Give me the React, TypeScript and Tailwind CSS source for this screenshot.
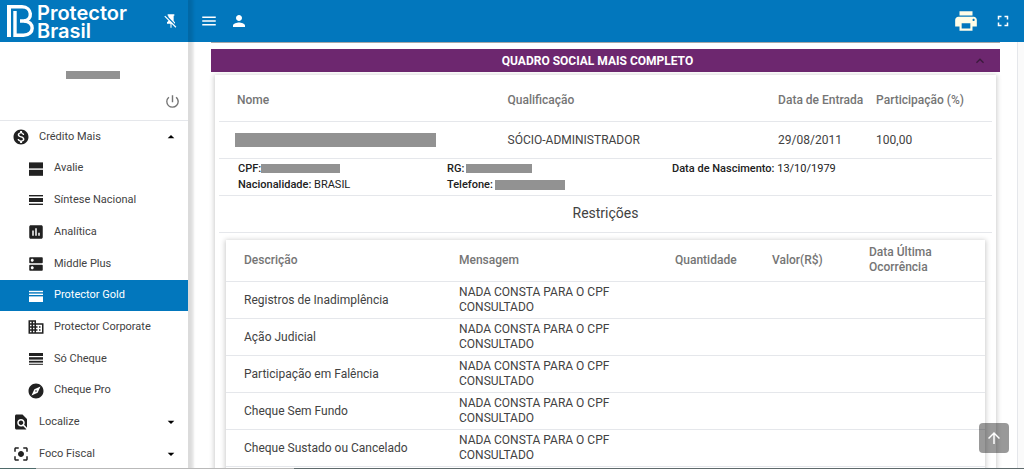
import { ReactNode, useState } from 'react';
import {
  MdArrowDropDown,
  MdArrowDropUp,
  MdArrowUpward,
  MdAssessment,
  MdBusiness,
  MdCenterFocusStrong,
  MdDns,
  MdExplore,
  MdFindInPage,
  MdFullscreen,
  MdKeyboardArrowUp,
  MdMenu,
  MdMonetizationOn,
  MdPerson,
  MdPowerSettingsNew,
  MdPrint,
} from 'react-icons/md';

type Bar = [y: number, height: number];

// Material style "stacked bars" icons, one rect per bar
const BarsIcon = ({ bars }: { bars: Bar[] }) => (
  <svg className="w-[18px] h-[18px]" viewBox="0 0 18 18" fill="currentColor">
    {bars.map(([y, h]) => (
      <rect key={y} x="2" y={y} width="14" height={h} />
    ))}
  </svg>
);

const subItems: { label: string; icon: ReactNode }[] = [
  { label: 'Avalie', icon: <BarsIcon bars={[[2.4, 6], [9.8, 6]]} /> },
  { label: 'Síntese Nacional', icon: <BarsIcon bars={[[4, 1.4], [7, 4], [12.6, 1.4]]} /> },
  { label: 'Analítica', icon: <MdAssessment className="w-[18px] h-[18px]" /> },
  { label: 'Middle Plus', icon: <MdDns className="w-[18px] h-[18px]" /> },
  { label: 'Protector Gold', icon: <BarsIcon bars={[[3.8, 1.4], [6.6, 1.4], [9.4, 5.6]]} /> },
  { label: 'Protector Corporate', icon: <MdBusiness className="w-[18px] h-[18px]" /> },
  { label: 'Só Cheque', icon: <BarsIcon bars={[[3, 3], [7.2, 2.4], [10.8, 1.8], [13.8, 1]]} /> },
  { label: 'Cheque Pro', icon: <MdExplore className="w-[18px] h-[18px]" /> },
];

const restrictions = [
  'Registros de Inadimplência',
  'Ação Judicial',
  'Participação em Falência',
  'Cheque Sem Fundo',
  'Cheque Sustado ou Cancelado',
];

const Logo = () => (
  <a href="#" className="flex items-center gap-[2px] text-white">
    <svg className="w-7 h-8" viewBox="0 0 28 32" fill="none" stroke="currentColor">
      <path d="M2 0V32" strokeWidth="4" />
      <path d="M1 1.7H15C25.500 1.700 26 15.500 17 16H13" strokeWidth="3.4" />
      <path d="M8 6V30.3H16.500C28 30.300 28 16 17 16" strokeWidth="3.4" />
    </svg>
    <span className="flex flex-col pt-[2px] font-['Inter'] text-[20px] leading-[18px] font-semibold">
      <span>Protector</span>
      <span>Brasil</span>
    </span>
  </a>
);

const PinOff = () => (
  <svg className="w-4 h-4" viewBox="0 0 24 24" fill="currentColor">
    <path d="M2,5.27L3.28,4L20,20.72L18.73,22L12.8,16.07V22H11.2V16H6V14L8,12V11.27L2,5.27M16,12L18,14V16H17.82L8,6.18V4H7V2H17V4H16V12Z" />
  </svg>
);

const Group = ({ label, icon, open }: { label: string; icon: ReactNode; open?: boolean }) => (
  <button type="button" className="flex-1 w-full flex items-center pl-3 pr-[9px] text-left">
    <span className="w-[27px]">{icon}</span>
    <span className="flex-1">{label}</span>
    {open ? <MdArrowDropUp className="w-4 h-4 text-black" /> : <MdArrowDropDown className="w-4 h-4 text-black" />}
  </button>
);

const Sidebar = () => {
  const [active, setActive] = useState('Protector Gold');

  return (
    <aside className="w-[188px] shrink-0 flex flex-col bg-white z-10 shadow-[3px_0_3px_2px_rgba(0,0,0,0.12)]">
      <div className="h-[42px] shrink-0 bg-[#0277bd] flex items-center justify-between pl-[7px] pr-[9px]">
        <Logo />
        <button type="button" aria-label="Desafixar menu" className="text-white">
          <PinOff />
        </button>
      </div>
      <div className="h-[79px] shrink-0 border-b border-gray-200 flex flex-col justify-between">
        <div className="w-[54px] h-2 mt-[29px] ml-[66px] bg-[#929292]" />
        <button type="button" aria-label="Sair" className="self-end mr-[7px] mb-[10px] text-[#757575]">
          <MdPowerSettingsNew className="w-[17px] h-[17px]" />
        </button>
      </div>
      <nav className="h-[349px] shrink-0 flex flex-col text-[11px] text-[#424242]">
        <Group label="Crédito Mais" icon={<MdMonetizationOn className="w-[18px] h-[18px] text-[#212121]" />} open />
        {subItems.map((item) => (
          <a
            key={item.label}
            href="#"
            onClick={() => setActive(item.label)}
            className={`flex-1 flex items-center gap-[9px] pl-[27px] ${
              item.label === active ? 'bg-[#0277bd] text-white' : ''
            }`}
          >
            <span className={item.label === active ? 'text-white' : 'text-[#212121]'}>{item.icon}</span>
            {item.label}
          </a>
        ))}
        <Group label="Localize" icon={<MdFindInPage className="w-[18px] h-[18px] text-[#212121]" />} />
        <Group label="Foco Fiscal" icon={<MdCenterFocusStrong className="w-[18px] h-[18px] text-[#212121]" />} />
      </nav>
    </aside>
  );
};

const RestrictionsTable = () => (
  <table className="w-full table-fixed text-left text-[12px] leading-[15px] text-[#424242]">
    <thead>
      <tr className="h-[42px] border-b border-gray-200 text-[#757575]">
        <th className="w-[215px] pl-[18px] font-medium">Descrição</th>
        <th className="w-[216px] pl-[18px] font-medium">Mensagem</th>
        <th className="w-[97px] pl-[18px] font-medium">Quantidade</th>
        <th className="w-[97px] pl-[18px] font-medium">Valor(R$)</th>
        <th className="pl-[18px] pr-10 font-medium">Data Última Ocorrência</th>
      </tr>
    </thead>
    <tbody>
      {restrictions.map((name) => (
        <tr key={name} className="border-b border-gray-200">
          <td className="pl-[18px] py-[3px]">{name}</td>
          <td className="pl-[18px] pr-8 py-[3px]">NADA CONSTA PARA O CPF CONSULTADO</td>
          <td />
          <td />
          <td />
        </tr>
      ))}
    </tbody>
  </table>
);

const SocialCard = () => (
  <div className="mx-1 mt-[3px] px-1 bg-white shadow-[0_1px_5px_1px_rgba(0,0,0,0.2)]">
    <table className="w-full table-fixed text-left text-[12px] text-[#424242]">
      <thead>
        <tr className="h-[46px] border-b border-gray-200 text-[#757575] whitespace-nowrap">
          <th className="w-[35%] pl-[18px] pb-1 pt-2 font-medium">Nome</th>
          <th className="w-[35%] pl-[18px] pb-1 pt-2 font-medium">Qualificação</th>
          <th className="w-[98px] pl-[18px] pb-1 pt-2 font-medium">Data de Entrada</th>
          <th className="pl-[18px] pb-1 pt-2 font-medium">Participação (%)</th>
        </tr>
      </thead>
      <tbody>
        <tr className="h-[37px] border-b border-gray-200">
          <td className="pl-4">
            <div className="w-[201px] h-[14px] bg-[#929292]" />
          </td>
          <td className="pl-[18px]">SÓCIO-ADMINISTRADOR</td>
          <td className="pl-[18px]">29/08/2011</td>
          <td className="pl-[18px]">100,00</td>
        </tr>
      </tbody>
    </table>

    <div className="h-[37px] border-b border-gray-200 pl-[19px] pt-[2px] grid grid-cols-[209px_225px_1fr] text-[11px] leading-4 text-[#212121]">
      <div>
        <div className="flex items-center">
          <b className="font-medium">CPF:</b>
          <span className="w-[79px] h-[9px] bg-[#929292]" />
        </div>
        <div>
          <b className="font-medium">Nacionalidade:</b> BRASIL
        </div>
      </div>
      <div>
        <div className="flex items-center gap-[2px]">
          <b className="font-medium">RG:</b>
          <span className="w-[66px] h-[9px] bg-[#929292]" />
        </div>
        <div className="flex items-center gap-[2px]">
          <b className="font-medium">Telefone:</b>
          <span className="w-[70px] h-[10px] bg-[#929292]" />
        </div>
      </div>
      <div>
        <b className="font-medium">Data de Nascimento:</b> 13/10/1979
      </div>
    </div>

    <h2 className="h-[37px] border-b border-gray-200 flex items-center justify-center text-[14px] text-[#424242]">
      Restrições
    </h2>

    <div className="mx-[7px] mt-[7px] pb-10 bg-white shadow-[0_1px_5px_1px_rgba(0,0,0,0.2)]">
      <RestrictionsTable />
    </div>
  </div>
);

export default function App() {
  return (
    <div className="relative h-screen flex overflow-hidden bg-[#fafafa] font-['Roboto',sans-serif]">
      <Sidebar />

      <div className="flex-1 min-w-0 flex flex-col">
        <header className="h-[42px] shrink-0 bg-[#0277bd] text-white flex items-center pl-3 pr-3">
          <button type="button" aria-label="Menu">
            <MdMenu className="w-[18px] h-[18px]" />
          </button>
          <button type="button" aria-label="Usuário" className="ml-3">
            <MdPerson className="w-[18px] h-[18px]" />
          </button>
          <button type="button" aria-label="Imprimir" className="ml-auto text-[#fffde7]">
            <MdPrint className="w-[26px] h-[26px]" />
          </button>
          <button type="button" aria-label="Tela cheia" className="ml-[15px]">
            <MdFullscreen className="w-[18px] h-[18px]" />
          </button>
        </header>

        <main className="flex-1 min-h-0 overflow-hidden ml-[6px] mr-[6px] pl-[17px] pr-[17px] bg-white border-r border-gray-200">
          <div className="h-px bg-[#a8a8a8]" />
          <section className="mt-[6px]">
            <button
              type="button"
              className="w-full h-[23px] flex items-center bg-[#6d276f] text-white text-[12px] font-bold pl-3 pr-3"
            >
              <span className="flex-1">QUADRO SOCIAL MAIS COMPLETO</span>
              <MdKeyboardArrowUp className="w-4 h-4 text-[#3b1a3d]" />
            </button>
            <SocialCard />
          </section>
        </main>
      </div>

      <button
        type="button"
        aria-label="Voltar ao topo"
        className="absolute right-[15px] bottom-4 w-[30px] h-[30px] rounded-sm bg-black/40 text-white flex items-center justify-center"
      >
        <MdArrowUpward className="w-[18px] h-[18px]" />
      </button>

      {/* Bottom edge */}
      <div className="absolute inset-x-0 bottom-0 h-px z-20 flex">
        <div className="w-9 bg-[#4f6a6a]" />
        <div className="w-[258px] bg-[#b9b9b9]" />
        <div className="flex-1 bg-[#5f6a6c]" />
      </div>
    </div>
  );
}
